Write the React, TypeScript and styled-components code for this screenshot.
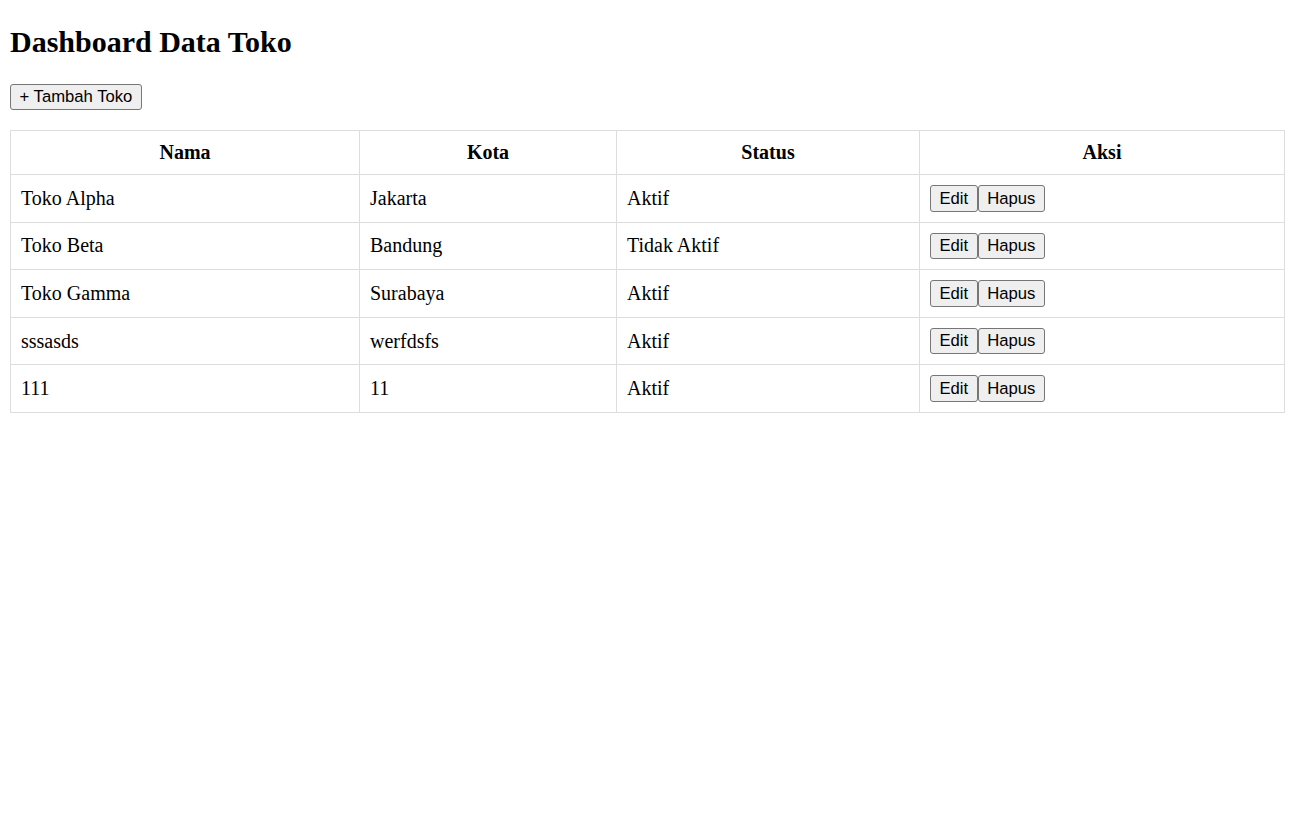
import React, { FC } from "react";
import styled, { createGlobalStyle } from "styled-components";

interface Toko {
  nama: string;
  kota: string;
  status: string;
}

const GlobalStyle = createGlobalStyle`
  body {
    margin: 0 10px 10px;
    background: #ffffff;
    color: #000000;
    font-family: "Liberation Serif", "Times New Roman", serif;
    font-size: 20px;
  }
`;

const Title = styled.h2`
  margin: 25px 0 24px;
  font-size: 30px;
  font-weight: bold;
  line-height: 34.5px;
`;

const Actions = styled.div`
  margin: 0 0 20px;
  display: flex;
`;

const Button = styled.button`
  font-family: "Liberation Sans", Arial, sans-serif;
  font-size: 16.67px;
  line-height: 19.6px;
  padding: 2.5px 8.5px;
  color: #000000;
  background: #efefef;
  border: 1px solid #767676;
  border-radius: 3px;
  cursor: pointer;

  &:hover {
    background: #e5e5e5;
  }
`;

const Table = styled.table`
  width: 100%;
  border-collapse: collapse;
  table-layout: fixed;
`;

const Th = styled.th<{ w?: number }>`
  ${(p) => (p.w ? `width: ${p.w}px;` : "")}
  padding: 10px;
  border: 1px solid #dddddd;
  font-size: 20px;
  line-height: 23px;
  font-weight: bold;
  text-align: center;
`;

const Td = styled.td`
  padding: 10px;
  border: 1px solid #dddddd;
  font-size: 20px;
  line-height: 23px;
  text-align: left;
  vertical-align: middle;
`;

const ButtonRow = styled.div`
  display: flex;
`;

const data: Toko[] = [
  { nama: "Toko Alpha", kota: "Jakarta", status: "Aktif" },
  { nama: "Toko Beta", kota: "Bandung", status: "Tidak Aktif" },
  { nama: "Toko Gamma", kota: "Surabaya", status: "Aktif" },
  { nama: "sssasds", kota: "werfdsfs", status: "Aktif" },
  { nama: "111", kota: "11", status: "Aktif" },
];

const App: FC = () => {
  return (
    <>
      <GlobalStyle />
      <Title>Dashboard Data Toko</Title>
      <Actions>
        <Button>+ Tambah Toko</Button>
      </Actions>
      <Table>
        <thead>
          <tr>
            <Th w={328}>Nama</Th>
            <Th w={236}>Kota</Th>
            <Th w={282}>Status</Th>
            <Th>Aksi</Th>
          </tr>
        </thead>
        <tbody>
          {data.map((toko, index) => (
            <tr key={index}>
              <Td>{toko.nama}</Td>
              <Td>{toko.kota}</Td>
              <Td>{toko.status}</Td>
              <Td>
                <ButtonRow>
                  <Button>Edit</Button>
                  <Button>Hapus</Button>
                </ButtonRow>
              </Td>
            </tr>
          ))}
        </tbody>
      </Table>
    </>
  );
};

export default App;
